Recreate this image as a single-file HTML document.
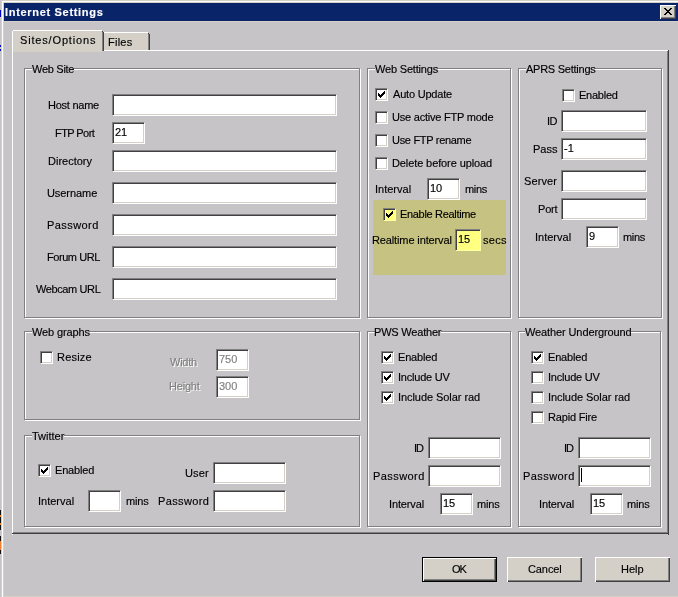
<!DOCTYPE html>
<html><head><meta charset="utf-8"><style>
html,body{margin:0;padding:0;width:678px;height:597px;overflow:hidden;background:#c6c4c7;}
body div{position:absolute;box-sizing:content-box;}
.t{font-family:"Liberation Sans",sans-serif;font-size:11px;line-height:13px;white-space:nowrap;color:#000;will-change:transform;-webkit-text-stroke:0.15px currentColor;}
.ed{border-top:1px solid #808080;border-left:1px solid #808080;border-right:1px solid #fff;border-bottom:1px solid #fff;}
.cb{width:11px;height:11px;border-top:1px solid #808080;border-left:1px solid #808080;border-right:1px solid #fff;border-bottom:1px solid #fff;}
.gd{border:1px solid #808080;}
.gw{border:1px solid #fff;}
.btn{background:#d4d0c8;}
</style></head><body>
<div style="left:0px;top:0px;width:678px;height:597px;background:#c6c4c7;"></div>
<div style="left:1px;top:0px;width:677px;height:1px;background:#d4d0c8;"></div>
<div style="left:1px;top:0px;width:1px;height:597px;background:#d4d0c8;"></div>
<div style="left:2px;top:1px;width:676px;height:1px;background:#fff;"></div>
<div style="left:2px;top:1px;width:1px;height:596px;background:#fff;"></div>
<div style="left:3px;top:2px;width:675px;height:1px;background:#d4d0c8;"></div>
<div style="left:3px;top:2px;width:1px;height:595px;background:#d4d0c8;"></div>
<div style="left:4px;top:3px;width:674px;height:18px;background:#0a246a;"></div>
<div style="left:4px;top:21px;width:674px;height:1px;background:#d4d0c8;"></div>
<div style="left:3px;top:596px;width:675px;height:1px;background:#d4d0c8;"></div>
<div style="left:0px;top:10px;width:1px;height:7px;background:#0000c0;"></div>
<div style="left:0px;top:45px;width:1px;height:2px;background:#0000c0;"></div>
<div style="left:0px;top:49px;width:1px;height:2px;background:#0000c0;"></div>
<div style="left:0px;top:510px;width:1px;height:20px;background:#101010;"></div>
<div style="left:0px;top:515px;width:1px;height:2px;background:#f08030;"></div>
<div style="left:0px;top:523px;width:1px;height:2px;background:#f08030;"></div>
<div style="left:0px;top:536px;width:1px;height:18px;background:#101010;"></div>
<div style="left:0px;top:541px;width:1px;height:9px;background:#f08030;"></div>
<div class="t" style="left:5.00px;top:6px;color:#fff;font-weight:bold;letter-spacing:0.688px;">Internet Settings</div>
<div class="btn" style="left:660px;top:5px;width:16px;height:14px;box-shadow:inset 1px 1px #fff, inset -1px -1px #404040, inset -2px -2px #808080;"><svg width="16" height="14" style="position:absolute;left:0;top:0" shape-rendering="crispEdges"><path d="M4 3h2v1h-2zM10 3h2v1h-2zM5 4h2v1h-2zM9 4h2v1h-2zM6 5h4v1h-4zM7 6h2v1h-2zM6 7h4v1h-4zM5 8h2v1h-2zM9 8h2v1h-2zM4 9h2v1h-2zM10 9h2v1h-2z" fill="#000"/></svg></div>
<div style="left:12px;top:50px;width:657px;height:1px;background:#fff;"></div>
<div style="left:12px;top:50px;width:1px;height:485px;background:#fff;"></div>
<div style="left:667px;top:51px;width:1px;height:482px;background:#808080;"></div>
<div style="left:668px;top:50px;width:1px;height:485px;background:#404040;"></div>
<div style="left:13px;top:532px;width:655px;height:1px;background:#808080;"></div>
<div style="left:12px;top:533px;width:657px;height:1px;background:#404040;"></div>
<div style="left:104px;top:33px;width:45px;height:17px;background:#d4d0c8;"></div>
<div style="left:104px;top:32px;width:44px;height:1px;background:#fff;"></div>
<div style="left:148px;top:34px;width:1px;height:16px;background:#808080;"></div>
<div style="left:148px;top:33px;width:1px;height:1px;background:#404040;"></div>
<div style="left:149px;top:34px;width:1px;height:16px;background:#404040;"></div>
<div class="t" style="left:108.00px;top:36px;letter-spacing:0.250px;">Files</div>
<div style="left:13px;top:31px;width:90px;height:21px;background:#d4d0c8;"></div>
<div style="left:13px;top:30px;width:89px;height:1px;background:#fff;"></div>
<div style="left:12px;top:31px;width:1px;height:21px;background:#fff;"></div>
<div style="left:102px;top:32px;width:1px;height:19px;background:#808080;"></div>
<div style="left:102px;top:31px;width:1px;height:1px;background:#404040;"></div>
<div style="left:103px;top:32px;width:1px;height:19px;background:#404040;"></div>
<div style="left:13px;top:50px;width:89px;height:2px;background:#d4d0c8;"></div>
<div class="t" style="left:20.00px;top:34px;letter-spacing:0.833px;">Sites/Options</div>
<div class="gw" style="left:25px;top:69px;width:334px;height:248px;"></div>
<div class="gd" style="left:24px;top:68px;width:334px;height:248px;"></div>
<div style="left:32px;top:67px;width:42px;height:4px;background:#c6c4c7;"></div>
<div class="t" style="left:32.00px;top:63px;letter-spacing:-0.286px;">Web Site</div>
<div class="gw" style="left:368px;top:69px;width:142px;height:248px;"></div>
<div class="gd" style="left:367px;top:68px;width:142px;height:248px;"></div>
<div style="left:375px;top:67px;width:63px;height:4px;background:#c6c4c7;"></div>
<div class="t" style="left:375.00px;top:63px;letter-spacing:-0.182px;">Web Settings</div>
<div class="gw" style="left:519px;top:69px;width:142px;height:248px;"></div>
<div class="gd" style="left:518px;top:68px;width:142px;height:248px;"></div>
<div style="left:526px;top:67px;width:69px;height:4px;background:#c6c4c7;"></div>
<div class="t" style="left:526.00px;top:63px;letter-spacing:-0.250px;">APRS Settings</div>
<div class="gw" style="left:25px;top:332px;width:334px;height:87px;"></div>
<div class="gd" style="left:24px;top:331px;width:334px;height:87px;"></div>
<div style="left:32px;top:330px;width:58px;height:4px;background:#c6c4c7;"></div>
<div class="t" style="left:32.00px;top:326px;letter-spacing:-0.111px;">Web graphs</div>
<div class="gw" style="left:25px;top:436px;width:334px;height:90px;"></div>
<div class="gd" style="left:24px;top:435px;width:334px;height:90px;"></div>
<div style="left:32px;top:434px;width:32px;height:4px;background:#c6c4c7;"></div>
<div class="t" style="left:32.00px;top:430px;letter-spacing:0.000px;">Twitter</div>
<div class="gw" style="left:368px;top:332px;width:142px;height:194px;"></div>
<div class="gd" style="left:367px;top:331px;width:142px;height:194px;"></div>
<div style="left:375px;top:330px;width:66px;height:4px;background:#c6c4c7;"></div>
<div class="t" style="left:374.00px;top:326px;letter-spacing:-0.200px;">PWS Weather</div>
<div class="gw" style="left:519px;top:332px;width:141px;height:194px;"></div>
<div class="gd" style="left:518px;top:331px;width:141px;height:194px;"></div>
<div style="left:525px;top:330px;width:106px;height:4px;background:#c6c4c7;"></div>
<div class="t" style="left:525.00px;top:326px;letter-spacing:-0.111px;">Weather Underground</div>
<div class="t" style="left:48.00px;top:99px;letter-spacing:-0.250px;">Host name</div>
<div class="t" style="left:55.00px;top:127px;letter-spacing:-0.571px;">FTP Port</div>
<div class="t" style="left:48.00px;top:155px;letter-spacing:0.000px;">Directory</div>
<div class="t" style="left:47.00px;top:187px;letter-spacing:-0.071px;">Username</div>
<div class="t" style="left:46.50px;top:219px;letter-spacing:0.429px;">Password</div>
<div class="t" style="left:46.50px;top:251px;letter-spacing:-0.438px;">Forum URL</div>
<div class="t" style="left:35.50px;top:283px;letter-spacing:-0.389px;">Webcam URL</div>
<div class="ed" style="left:112px;top:94px;width:223px;height:20px;background:#fff;border-right-color:#fff;border-bottom-color:#fff;box-shadow:inset 1px 1px #404040, inset -1px -1px #d4d0c8;"></div>
<div class="ed" style="left:112px;top:122px;width:31px;height:20px;background:#fff;border-right-color:#fff;border-bottom-color:#fff;box-shadow:inset 1px 1px #404040, inset -1px -1px #d4d0c8;"></div>
<div class="t" style="left:115.00px;top:126px;letter-spacing:0.000px;">21</div>
<div class="ed" style="left:112px;top:150px;width:223px;height:20px;background:#fff;border-right-color:#fff;border-bottom-color:#fff;box-shadow:inset 1px 1px #404040, inset -1px -1px #d4d0c8;"></div>
<div class="ed" style="left:112px;top:182px;width:223px;height:20px;background:#fff;border-right-color:#fff;border-bottom-color:#fff;box-shadow:inset 1px 1px #404040, inset -1px -1px #d4d0c8;"></div>
<div class="ed" style="left:112px;top:214px;width:223px;height:20px;background:#fff;border-right-color:#fff;border-bottom-color:#fff;box-shadow:inset 1px 1px #404040, inset -1px -1px #d4d0c8;"></div>
<div class="ed" style="left:112px;top:246px;width:223px;height:20px;background:#fff;border-right-color:#fff;border-bottom-color:#fff;box-shadow:inset 1px 1px #404040, inset -1px -1px #d4d0c8;"></div>
<div class="ed" style="left:112px;top:278px;width:223px;height:20px;background:#fff;border-right-color:#fff;border-bottom-color:#fff;box-shadow:inset 1px 1px #404040, inset -1px -1px #d4d0c8;"></div>
<div class="cb" style="left:375px;top:88px;background:#fff;border-right-color:#fff;border-bottom-color:#fff;box-shadow:inset 1px 1px #404040, inset -1px -1px #d4d0c8;"><svg width="7" height="7" style="position:absolute;left:2px;top:2px" shape-rendering="crispEdges"><path d="M6 0h1v1h-1zM5 1h2v1h-2zM4 2h3v1h-3zM0 2h1v3h-1zM1 3h1v3h-1zM2 4h1v3h-1zM3 3h3v1h-3zM3 4h2v1h-2zM3 5h1v1h-1z" fill="#000"/></svg></div>
<div class="t" style="left:393.00px;top:88px;letter-spacing:-0.200px;">Auto Update</div>
<div class="cb" style="left:375px;top:111px;background:#fff;border-right-color:#fff;border-bottom-color:#fff;box-shadow:inset 1px 1px #404040, inset -1px -1px #d4d0c8;"></div>
<div class="t" style="left:392.00px;top:111px;letter-spacing:-0.222px;">Use active FTP mode</div>
<div class="cb" style="left:375px;top:134px;background:#fff;border-right-color:#fff;border-bottom-color:#fff;box-shadow:inset 1px 1px #404040, inset -1px -1px #d4d0c8;"></div>
<div class="t" style="left:392.00px;top:134px;letter-spacing:-0.308px;">Use FTP rename</div>
<div class="cb" style="left:375px;top:157px;background:#fff;border-right-color:#fff;border-bottom-color:#fff;box-shadow:inset 1px 1px #404040, inset -1px -1px #d4d0c8;"></div>
<div class="t" style="left:392.00px;top:157px;letter-spacing:-0.105px;">Delete before upload</div>
<div class="t" style="left:374.50px;top:183px;letter-spacing:0.000px;">Interval</div>
<div class="ed" style="left:427px;top:178px;width:31px;height:20px;background:#fff;border-right-color:#fff;border-bottom-color:#fff;box-shadow:inset 1px 1px #404040, inset -1px -1px #d4d0c8;"></div>
<div class="t" style="left:430.00px;top:182px;letter-spacing:0.000px;">10</div>
<div class="t" style="left:465.00px;top:183px;letter-spacing:-0.333px;">mins</div>
<div style="left:373px;top:200px;width:133px;height:75px;background:#c6c382;"></div>
<div class="cb" style="left:383px;top:208px;background:#ffff80;border-right-color:#ffffa8;border-bottom-color:#ffffa8;box-shadow:inset 1px 1px #404040, inset -1px -1px #ffff80;"><svg width="7" height="7" style="position:absolute;left:2px;top:2px" shape-rendering="crispEdges"><path d="M6 0h1v1h-1zM5 1h2v1h-2zM4 2h3v1h-3zM0 2h1v3h-1zM1 3h1v3h-1zM2 4h1v3h-1zM3 3h3v1h-3zM3 4h2v1h-2zM3 5h1v1h-1z" fill="#000"/></svg></div>
<div class="t" style="left:399.50px;top:208px;letter-spacing:-0.321px;">Enable Realtime</div>
<div class="t" style="left:371.50px;top:234px;letter-spacing:-0.125px;">Realtime interval</div>
<div class="ed" style="left:455px;top:229px;width:24px;height:20px;background:#ffff80;border-right-color:#ffffa8;border-bottom-color:#ffffa8;box-shadow:inset 1px 1px #404040, inset -1px -1px #ffff80;"></div>
<div class="t" style="left:458.00px;top:233px;letter-spacing:0.000px;">15</div>
<div class="t" style="left:483.00px;top:234px;letter-spacing:0.333px;">secs</div>
<div class="cb" style="left:562px;top:89px;background:#fff;border-right-color:#fff;border-bottom-color:#fff;box-shadow:inset 1px 1px #404040, inset -1px -1px #d4d0c8;"></div>
<div class="t" style="left:578.50px;top:89px;letter-spacing:-0.250px;">Enabled</div>
<div class="t" style="left:547.00px;top:115px;letter-spacing:-0.500px;">ID</div>
<div class="ed" style="left:561px;top:110px;width:84px;height:20px;background:#fff;border-right-color:#fff;border-bottom-color:#fff;box-shadow:inset 1px 1px #404040, inset -1px -1px #d4d0c8;"></div>
<div class="t" style="left:533.00px;top:143px;letter-spacing:0.000px;">Pass</div>
<div class="ed" style="left:561px;top:138px;width:84px;height:20px;background:#fff;border-right-color:#fff;border-bottom-color:#fff;box-shadow:inset 1px 1px #404040, inset -1px -1px #d4d0c8;"></div>
<div class="t" style="left:564.00px;top:142px;letter-spacing:0.000px;">-1</div>
<div class="t" style="left:524.00px;top:175px;letter-spacing:0.100px;">Server</div>
<div class="ed" style="left:561px;top:170px;width:84px;height:20px;background:#fff;border-right-color:#fff;border-bottom-color:#fff;box-shadow:inset 1px 1px #404040, inset -1px -1px #d4d0c8;"></div>
<div class="t" style="left:537.50px;top:203px;letter-spacing:-0.167px;">Port</div>
<div class="ed" style="left:561px;top:198px;width:84px;height:20px;background:#fff;border-right-color:#fff;border-bottom-color:#fff;box-shadow:inset 1px 1px #404040, inset -1px -1px #d4d0c8;"></div>
<div class="t" style="left:534.50px;top:231px;letter-spacing:0.000px;">Interval</div>
<div class="ed" style="left:586px;top:226px;width:31px;height:20px;background:#fff;border-right-color:#fff;border-bottom-color:#fff;box-shadow:inset 1px 1px #404040, inset -1px -1px #d4d0c8;"></div>
<div class="t" style="left:589.00px;top:230px;letter-spacing:0.000px;">9</div>
<div class="t" style="left:622.50px;top:231px;letter-spacing:-0.333px;">mins</div>
<div class="cb" style="left:40px;top:351px;background:#fff;border-right-color:#fff;border-bottom-color:#fff;box-shadow:inset 1px 1px #404040, inset -1px -1px #d4d0c8;"></div>
<div class="t" style="left:56.50px;top:351px;letter-spacing:0.200px;">Resize</div>
<div class="t" style="left:170.00px;top:356px;color:#808080;letter-spacing:-0.250px;text-shadow:1px 1px #fff;">Width</div>
<div class="ed" style="left:216px;top:349px;width:31px;height:20px;background:#fff;border-right-color:#fff;border-bottom-color:#fff;box-shadow:inset 1px 1px #404040, inset -1px -1px #d4d0c8;"></div>
<div class="t" style="left:219.00px;top:353px;color:#808080;letter-spacing:0.000px;">750</div>
<div class="t" style="left:169.00px;top:380px;color:#808080;letter-spacing:-0.200px;text-shadow:1px 1px #fff;">Height</div>
<div class="ed" style="left:216px;top:376px;width:31px;height:20px;background:#fff;border-right-color:#fff;border-bottom-color:#fff;box-shadow:inset 1px 1px #404040, inset -1px -1px #d4d0c8;"></div>
<div class="t" style="left:219.00px;top:380px;color:#808080;letter-spacing:0.000px;">300</div>
<div class="cb" style="left:38px;top:464px;background:#fff;border-right-color:#fff;border-bottom-color:#fff;box-shadow:inset 1px 1px #404040, inset -1px -1px #d4d0c8;"><svg width="7" height="7" style="position:absolute;left:2px;top:2px" shape-rendering="crispEdges"><path d="M6 0h1v1h-1zM5 1h2v1h-2zM4 2h3v1h-3zM0 2h1v3h-1zM1 3h1v3h-1zM2 4h1v3h-1zM3 3h3v1h-3zM3 4h2v1h-2zM3 5h1v1h-1z" fill="#000"/></svg></div>
<div class="t" style="left:54.50px;top:464px;letter-spacing:-0.167px;">Enabled</div>
<div class="t" style="left:37.50px;top:495px;letter-spacing:0.000px;">Interval</div>
<div class="ed" style="left:88px;top:490px;width:31px;height:20px;background:#fff;border-right-color:#fff;border-bottom-color:#fff;box-shadow:inset 1px 1px #404040, inset -1px -1px #d4d0c8;"></div>
<div class="t" style="left:125.50px;top:495px;letter-spacing:-0.167px;">mins</div>
<div class="t" style="left:184.50px;top:467px;letter-spacing:0.167px;">User</div>
<div class="ed" style="left:213px;top:462px;width:71px;height:20px;background:#fff;border-right-color:#fff;border-bottom-color:#fff;box-shadow:inset 1px 1px #404040, inset -1px -1px #d4d0c8;"></div>
<div class="t" style="left:157.50px;top:495px;letter-spacing:0.357px;">Password</div>
<div class="ed" style="left:213px;top:490px;width:71px;height:20px;background:#fff;border-right-color:#fff;border-bottom-color:#fff;box-shadow:inset 1px 1px #404040, inset -1px -1px #d4d0c8;"></div>
<div class="cb" style="left:381px;top:351px;background:#fff;border-right-color:#fff;border-bottom-color:#fff;box-shadow:inset 1px 1px #404040, inset -1px -1px #d4d0c8;"><svg width="7" height="7" style="position:absolute;left:2px;top:2px" shape-rendering="crispEdges"><path d="M6 0h1v1h-1zM5 1h2v1h-2zM4 2h3v1h-3zM0 2h1v3h-1zM1 3h1v3h-1zM2 4h1v3h-1zM3 3h3v1h-3zM3 4h2v1h-2zM3 5h1v1h-1z" fill="#000"/></svg></div>
<div class="t" style="left:397.50px;top:351px;letter-spacing:-0.167px;">Enabled</div>
<div class="cb" style="left:381px;top:371px;background:#fff;border-right-color:#fff;border-bottom-color:#fff;box-shadow:inset 1px 1px #404040, inset -1px -1px #d4d0c8;"><svg width="7" height="7" style="position:absolute;left:2px;top:2px" shape-rendering="crispEdges"><path d="M6 0h1v1h-1zM5 1h2v1h-2zM4 2h3v1h-3zM0 2h1v3h-1zM1 3h1v3h-1zM2 4h1v3h-1zM3 3h3v1h-3zM3 4h2v1h-2zM3 5h1v1h-1z" fill="#000"/></svg></div>
<div class="t" style="left:397.50px;top:371px;letter-spacing:-0.222px;">Include UV</div>
<div class="cb" style="left:381px;top:391px;background:#fff;border-right-color:#fff;border-bottom-color:#fff;box-shadow:inset 1px 1px #404040, inset -1px -1px #d4d0c8;"><svg width="7" height="7" style="position:absolute;left:2px;top:2px" shape-rendering="crispEdges"><path d="M6 0h1v1h-1zM5 1h2v1h-2zM4 2h3v1h-3zM0 2h1v3h-1zM1 3h1v3h-1zM2 4h1v3h-1zM3 3h3v1h-3zM3 4h2v1h-2zM3 5h1v1h-1z" fill="#000"/></svg></div>
<div class="t" style="left:397.50px;top:391px;letter-spacing:-0.062px;">Include Solar rad</div>
<div class="t" style="left:413.50px;top:442px;letter-spacing:-1.000px;">ID</div>
<div class="ed" style="left:428px;top:437px;width:71px;height:20px;background:#fff;border-right-color:#fff;border-bottom-color:#fff;box-shadow:inset 1px 1px #404040, inset -1px -1px #d4d0c8;"></div>
<div class="t" style="left:372.50px;top:470px;letter-spacing:0.429px;">Password</div>
<div class="ed" style="left:428px;top:465px;width:71px;height:20px;background:#fff;border-right-color:#fff;border-bottom-color:#fff;box-shadow:inset 1px 1px #404040, inset -1px -1px #d4d0c8;"></div>
<div class="t" style="left:389.00px;top:498px;letter-spacing:-0.143px;">Interval</div>
<div class="ed" style="left:440px;top:493px;width:31px;height:20px;background:#fff;border-right-color:#fff;border-bottom-color:#fff;box-shadow:inset 1px 1px #404040, inset -1px -1px #d4d0c8;"></div>
<div class="t" style="left:443.00px;top:497px;letter-spacing:0.000px;">15</div>
<div class="t" style="left:476.50px;top:498px;letter-spacing:-0.167px;">mins</div>
<div class="cb" style="left:531px;top:351px;background:#fff;border-right-color:#fff;border-bottom-color:#fff;box-shadow:inset 1px 1px #404040, inset -1px -1px #d4d0c8;"><svg width="7" height="7" style="position:absolute;left:2px;top:2px" shape-rendering="crispEdges"><path d="M6 0h1v1h-1zM5 1h2v1h-2zM4 2h3v1h-3zM0 2h1v3h-1zM1 3h1v3h-1zM2 4h1v3h-1zM3 3h3v1h-3zM3 4h2v1h-2zM3 5h1v1h-1z" fill="#000"/></svg></div>
<div class="t" style="left:547.50px;top:351px;letter-spacing:-0.167px;">Enabled</div>
<div class="cb" style="left:531px;top:371px;background:#fff;border-right-color:#fff;border-bottom-color:#fff;box-shadow:inset 1px 1px #404040, inset -1px -1px #d4d0c8;"></div>
<div class="t" style="left:547.50px;top:371px;letter-spacing:-0.222px;">Include UV</div>
<div class="cb" style="left:531px;top:391px;background:#fff;border-right-color:#fff;border-bottom-color:#fff;box-shadow:inset 1px 1px #404040, inset -1px -1px #d4d0c8;"></div>
<div class="t" style="left:547.50px;top:391px;letter-spacing:-0.062px;">Include Solar rad</div>
<div class="cb" style="left:531px;top:411px;background:#fff;border-right-color:#fff;border-bottom-color:#fff;box-shadow:inset 1px 1px #404040, inset -1px -1px #d4d0c8;"></div>
<div class="t" style="left:547.50px;top:411px;letter-spacing:-0.167px;">Rapid Fire</div>
<div class="t" style="left:563.50px;top:442px;letter-spacing:-1.000px;">ID</div>
<div class="ed" style="left:578px;top:437px;width:71px;height:20px;background:#fff;border-right-color:#fff;border-bottom-color:#fff;box-shadow:inset 1px 1px #404040, inset -1px -1px #d4d0c8;"></div>
<div class="t" style="left:522.50px;top:470px;letter-spacing:0.429px;">Password</div>
<div class="ed" style="left:578px;top:465px;width:71px;height:20px;background:#fff;border-right-color:#fff;border-bottom-color:#fff;box-shadow:inset 1px 1px #404040, inset -1px -1px #d4d0c8;"></div>
<div style="left:581px;top:468px;width:1px;height:14px;background:#000;"></div>
<div class="t" style="left:539.00px;top:498px;letter-spacing:-0.143px;">Interval</div>
<div class="ed" style="left:590px;top:493px;width:31px;height:20px;background:#fff;border-right-color:#fff;border-bottom-color:#fff;box-shadow:inset 1px 1px #404040, inset -1px -1px #d4d0c8;"></div>
<div class="t" style="left:593.00px;top:497px;letter-spacing:0.000px;">15</div>
<div class="t" style="left:626.50px;top:498px;letter-spacing:-0.167px;">mins</div>
<div style="left:422px;top:557px;width:75px;height:25px;background:#000;"></div>
<div class="btn" style="left:423px;top:558px;width:73px;height:23px;box-shadow:inset 1px 1px #fff, inset -1px -1px #404040, inset -2px -2px #808080;"></div>
<div class="t" style="left:451.50px;top:563px;letter-spacing:-1.000px;">OK</div>
<div class="btn" style="left:507px;top:557px;width:75px;height:25px;box-shadow:inset 1px 1px #fff, inset -1px -1px #404040, inset -2px -2px #808080;"></div>
<div class="t" style="left:527.50px;top:563px;letter-spacing:-0.100px;">Cancel</div>
<div class="btn" style="left:595px;top:557px;width:75px;height:25px;box-shadow:inset 1px 1px #fff, inset -1px -1px #404040, inset -2px -2px #808080;"></div>
<div class="t" style="left:620.50px;top:563px;letter-spacing:0.000px;">Help</div>
</body></html>
